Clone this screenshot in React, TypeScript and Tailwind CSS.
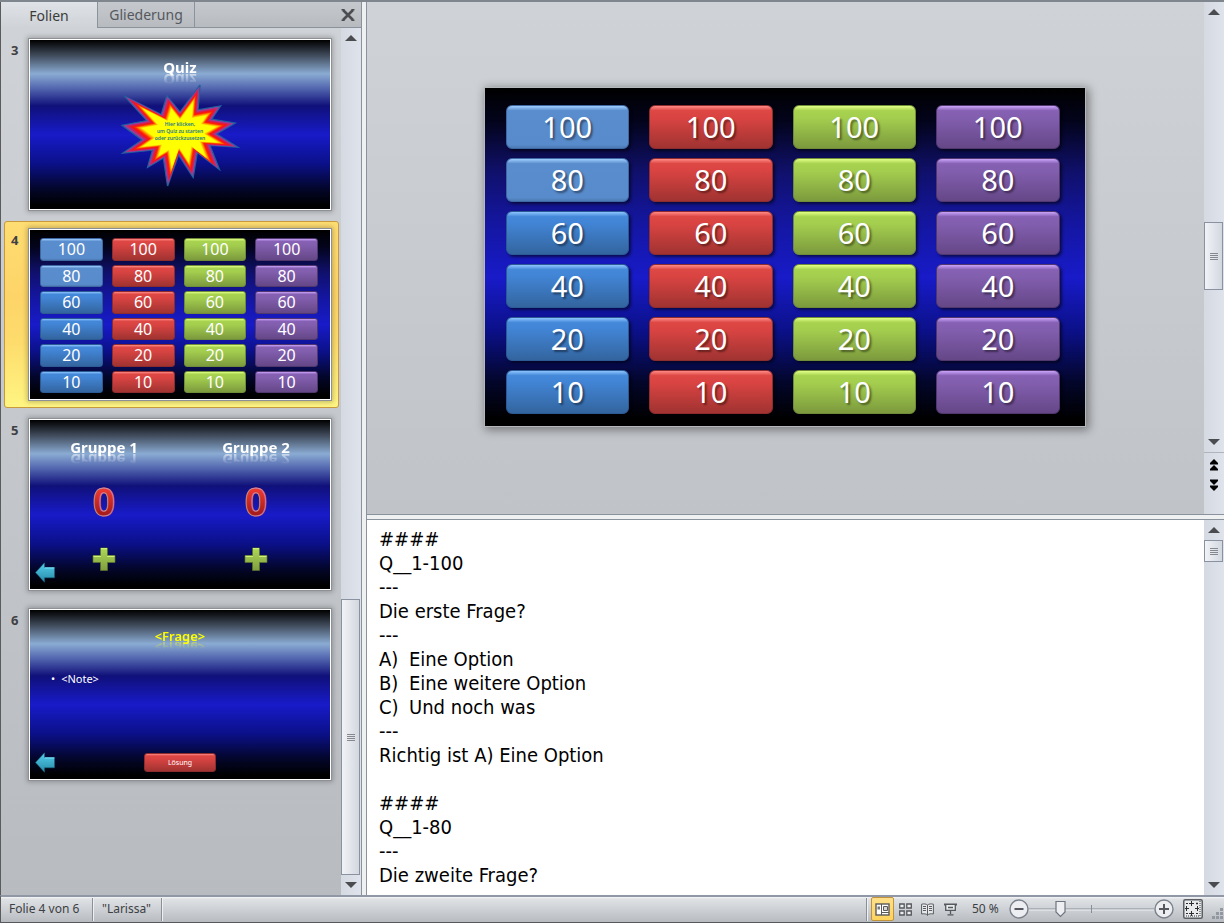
import React from "react";
import clsx from "clsx";

const TITLE_SLIDE_BG =
  "bg-[linear-gradient(180deg,#000_0%,#3f4a5a_9%,#8aabd3_20%,#5063ad_29%,#10107a_39%,#181bc8_56%,#0b108a_73%,#03062a_88%,#000_98%)]";
const BOARD_SLIDE_BG =
  "bg-[linear-gradient(180deg,#000_0%,#03041c_10%,#10106c_25%,#1416a0_40%,#181bc8_56%,#0b1088_72%,#03062a_87%,#000_98%)]";

const TITLE_REFLECTION =
  "[-webkit-box-reflect:below_-7px_linear-gradient(transparent_30%,rgba(255,255,255,0.8)_100%)]";

const TONES = {
  blue: "border-[#2c5a94] bg-[linear-gradient(180deg,#8cc4ff_0%,#4488da_11%,#4285d6_25%,#33659f_100%)]",
  sky: "border-[#3d68a3] bg-[linear-gradient(180deg,#9fceff_0%,#5a8dcd_11%,#588bcb_92%,#4d7ab3_100%)]",
  red: "border-[#8d2c2e] bg-[linear-gradient(180deg,#ff8a86_0%,#dd4744_11%,#d94442_28%,#a03331_100%)]",
  green: "border-[#6f8c38] bg-[linear-gradient(180deg,#e2ff86_0%,#a8d350_11%,#a3cd4e_30%,#7c9a3d_100%)]",
  purple: "border-[#50386f] bg-[linear-gradient(180deg,#cba4fb_0%,#8661b4_11%,#825eae_30%,#654787_100%)]",
};
type Tone = keyof typeof TONES;

const COLUMN_TONES: Tone[] = ["blue", "red", "green", "purple"];
const POINTS = [100, 80, 60, 40, 20, 10];

const NOTES = [
  "####",
  "Q__1-100",
  "---",
  "Die erste Frage?",
  "---",
  "A)\tEine Option",
  "B)\tEine weitere Option",
  "C)\tUnd noch was",
  "---",
  "Richtig ist A) Eine Option",
  "",
  "####",
  "Q__1-80",
  "---",
  "Die zweite Frage?",
].join("\n");

function toneFor(column: number, points: number): Tone {
  return column === 0 && points >= 80 ? "sky" : COLUMN_TONES[column];
}

function Board({ large = false }: { large?: boolean }) {
  const Cell = large ? "button" : "div";
  return (
    <div
      className={clsx(
        "grid h-full w-full grid-cols-4 grid-rows-6 text-white",
        BOARD_SLIDE_BG,
        large
          ? "gap-x-5 gap-y-[9px] pt-[17px] pr-[25px] pb-3 pl-[21px] text-[29px] leading-none"
          : "gap-x-[9px] gap-y-1 pt-2 pr-3 pb-[6px] pl-[10px] text-[16px] leading-none",
      )}
    >
      {POINTS.map((points) =>
        COLUMN_TONES.map((_, column) => (
          <Cell
            key={`${points}-${column}`}
            className={clsx(
              "flex items-center justify-center border",
              TONES[toneFor(column, points)],
              large
                ? "rounded-md pb-[2px] shadow-[2px_2px_3px_rgba(0,0,0,0.55)] [text-shadow:2px_2px_2px_rgba(0,0,0,0.45)]"
                : "rounded-[3px]",
            )}
          >
            {points}
          </Cell>
        )),
      )}
    </div>
  );
}

const BURST =
  "10800,5800 8352,2295 7312,6320 370,2295 4627,7617 0,8615 3722,11775 135,14587 5667,13937 4762,17617 7715,15627 8485,21600 10532,14935 13247,19737 14020,14457 18145,18095 16380,12942 21600,13290 17607,10475 21097,8137 16702,7315 18380,4457 14155,5325 14522,0";

const BURST_LAYERS: [number, string][] = [
  [0.97, "#a03a98"],
  [0.93, "#b52d7c"],
  [0.9, "#d8204c"],
  [0.86, "#f01522"],
  [0.82, "#ff1c08"],
  [0.78, "#ff4400"],
  [0.75, "#ff7a00"],
  [0.72, "#ffa800"],
  [0.69, "#ffd400"],
  [0.66, "#ffff00"],
];

function Burst() {
  return (
    <svg viewBox="0 0 21600 21600" preserveAspectRatio="none" className="h-full w-full overflow-visible" aria-hidden="true">
      <polygon points={BURST} fill="#8e4ab4" stroke="#1f5f9c" strokeWidth="260" />
      {BURST_LAYERS.map(([scale, fill]) => (
        <polygon
          key={scale}
          points={BURST}
          fill={fill}
          transform={`translate(10800 10400) scale(${scale}) translate(-10800 -10400)`}
        />
      ))}
    </svg>
  );
}

function QuizSlide() {
  return (
    <div className={clsx("flex h-full flex-col items-center pt-[17px]", TITLE_SLIDE_BG)}>
      <div className={clsx("text-[15px] leading-5 font-bold text-white", TITLE_REFLECTION)}>Quiz</div>
      <div className="mt-2 grid h-[101px] w-[116px]">
        <div className="col-start-1 row-start-1 h-[101px]">
          <Burst />
        </div>
        <div className="z-10 col-start-1 row-start-1 pt-9 text-center text-[5px] leading-[7px] font-semibold whitespace-nowrap text-[#17788c]">
          Hier klicken,
          <br />
          um Quiz zu starten
          <br />
          oder zurückzusetzen
        </div>
      </div>
    </div>
  );
}

function BackArrow() {
  return (
    <svg width="20" height="21" viewBox="0 0 20 21" aria-hidden="true">
      <defs>
        <linearGradient id="back" x1="0" y1="0" x2="0" y2="1">
          <stop offset="0" stopColor="#56d0ee" />
          <stop offset="1" stopColor="#2589a6" />
        </linearGradient>
      </defs>
      <path d="M0.5 10.5 9.5 0.8V5.5H19.5V15.8H9.5V20.3Z" fill="url(#back)" stroke="#17637a" strokeWidth="0.5" />
      <path d="M9.7 5.9H19.3" stroke="#7fe9ff" strokeWidth="1" />
    </svg>
  );
}

function Plus() {
  return (
    <svg width="24" height="24" viewBox="0 0 24 24" aria-hidden="true">
      <defs>
        <linearGradient id="plus" x1="0" y1="0" x2="0" y2="1">
          <stop offset="0" stopColor="#aed957" />
          <stop offset="1" stopColor="#7f9d3f" />
        </linearGradient>
      </defs>
      <path d="M8.5 1H15.5V8.5H23V15.5H15.5V23.5H8.5V15.5H1V8.5H8.5Z" fill="url(#plus)" stroke="#5b702b" strokeWidth="0.7" />
      <path d="M9 1.7H15M1.5 9.3H8.8M15.2 9.3H22.5" stroke="#dcff80" strokeWidth="1" />
    </svg>
  );
}

function GroupSlide() {
  return (
    <div className={clsx("flex h-full flex-col pt-[17px]", TITLE_SLIDE_BG)}>
      <div className="grid grid-cols-2 gap-2 px-[2px]">
        {["Gruppe 1", "Gruppe 2"].map((name) => (
          <div key={name} className="flex flex-col items-center">
            <div className={clsx("text-[15px] leading-5 font-bold text-white", TITLE_REFLECTION)}>{name}</div>
            <div className="mt-6 bg-[linear-gradient(180deg,#ef3a32_20%,#a81c1a_80%)] bg-clip-text font-['Open_Sans','Noto_Sans',sans-serif] text-[39px] leading-10 font-bold text-transparent [-webkit-text-stroke:1px_#c98a9e]">
              0
            </div>
            <div className="mt-[26px]">
              <Plus />
            </div>
          </div>
        ))}
      </div>
      <div className="-mt-[9px] pl-[5px]">
        <BackArrow />
      </div>
    </div>
  );
}

function QuestionSlide() {
  return (
    <div className={clsx("flex h-full flex-col pt-4 pb-[6px]", TITLE_SLIDE_BG)}>
      <div className="text-center text-[13px] leading-5 font-semibold text-[#ffff00] [-webkit-box-reflect:below_-9px_linear-gradient(transparent_40%,rgba(255,255,255,0.8)_100%)]">
        &lt;Frage&gt;
      </div>
      <ul className="mt-[25px] pl-[21px] text-[11px] leading-4 text-white">
        <li className="flex gap-[6px]">
          <span>•</span>
          <span>&lt;Note&gt;</span>
        </li>
      </ul>
      <div className="mt-auto grid grid-cols-[1fr_72px_1fr] items-center pr-[5px] pl-[5px]">
        <BackArrow />
        <div className={clsx("flex h-[19px] items-center justify-center rounded-[3px] border text-[7px] leading-none text-white", TONES.red)}>
          Lösung
        </div>
      </div>
    </div>
  );
}

const SLIDES = [
  { number: 3, selected: false, content: <QuizSlide /> },
  { number: 4, selected: true, content: <Board /> },
  { number: 5, selected: false, content: <GroupSlide /> },
  { number: 6, selected: false, content: <QuestionSlide /> },
];

function ArrowButton({ label, down = false }: { label: string; down?: boolean }) {
  return (
    <button aria-label={label} className="flex h-5 w-full shrink-0 items-center justify-center">
      <svg width="12" height="6" viewBox="0 0 12 6" className={clsx(down && "rotate-180")} aria-hidden="true">
        <path d="M6 0 12 6H0Z" fill="#4a4c50" />
      </svg>
    </button>
  );
}

function PageButton({ label, down = false }: { label: string; down?: boolean }) {
  return (
    <button aria-label={label} className="flex h-5 w-full shrink-0 items-center justify-center">
      <svg width="10" height="12" viewBox="0 0 10 12" className={clsx(down && "rotate-180")} aria-hidden="true">
        <path d="M5 0 9 4V5.5H1V4ZM5 6 9 10V11.5H1V10Z" fill="#000" />
      </svg>
    </button>
  );
}

function Thumb({ className }: { className: string }) {
  return (
    <div
      className={clsx(
        "flex w-[19px] shrink-0 flex-col items-center justify-center gap-px border border-[#8a92a0] bg-linear-to-r from-[#f1f3f7] to-[#d3d7df]",
        className,
      )}
    >
      {[0, 1, 2, 3].map((line) => (
        <span key={line} className="h-px w-2 bg-[#85898f]" />
      ))}
    </div>
  );
}

const TRACK = "flex w-5 shrink-0 flex-col bg-linear-to-r from-[#d5d9e2] to-[#dfe3ec]";

function SlidesPane() {
  return (
    <aside className="flex w-[362px] shrink-0 flex-col border-r border-l border-r-[#8a929c] border-l-[#5b5b5b]">
      <div className="flex h-[26px] shrink-0 bg-linear-to-b from-[#c5c9ce] to-[#b7bbc0] text-[14px] text-[#55585d]" role="tablist">
        <button role="tab" aria-selected="true" className="w-24 bg-linear-to-b from-[#dfe2e6] to-[#cfd2d6] text-[#3b3b3b]">
          Folien
        </button>
        <button role="tab" aria-selected="false" className="w-[98px] border-x border-b border-[#8a929c]">
          Gliederung
        </button>
        <div className="flex flex-1 items-center justify-end border-b border-[#8a929c] pr-[6px]">
          <button aria-label="Schließen">
            <svg width="14" height="12" viewBox="0 0 14 12" aria-hidden="true">
              <path d="M2 1 12 11M12 1 2 11" stroke="#4b4d50" strokeWidth="2.6" />
              <path d="M0.5 0.7H3.5M10.5 0.7H13.5M0.5 11.3H3.5M10.5 11.3H13.5" stroke="#4b4d50" strokeWidth="1.4" />
            </svg>
          </button>
        </div>
      </div>
      <div className="flex min-h-0 flex-1 bg-linear-to-b from-[#cfd2d6] to-[#b8bbc0]">
        <ol className="flex min-w-0 flex-1 flex-col gap-[3px] overflow-hidden pt-[3px] pr-[2px] pl-[3px]">
          {SLIDES.map(({ number, selected, content }) => (
            <li
              key={number}
              className={clsx(
                "flex h-[187px] shrink-0 rounded-[3px] border pt-[7px]",
                selected
                  ? "border-[#c99a3c] bg-[linear-gradient(180deg,#fedd72_0%,#fdd468_40%,#fddc6c_65%,#fff582_100%)]"
                  : "border-transparent",
              )}
            >
              <span className="w-6 pt-[3px] pl-[6px] text-[13px] leading-4 font-bold text-[#3f4043]">{number}</span>
              <div className="h-[171px] w-[302px] overflow-hidden border border-white shadow-[0_0_0_1px_#8d9095,0_0_5px_2px_rgba(0,0,0,0.25)]">
                {content}
              </div>
            </li>
          ))}
        </ol>
        <div className={TRACK}>
          <ArrowButton label="Nach oben" />
          <div className="flex-1" />
          <Thumb className="h-[276px]" />
          <ArrowButton label="Nach unten" down />
        </div>
      </div>
    </aside>
  );
}

function Editor() {
  return (
    <main className="ml-1 flex min-w-0 flex-1 flex-col border-l border-[#8a929c]">
      <section className="flex min-h-0 flex-1 border-b border-[#8a929c]">
        <div className="flex min-w-0 flex-1 items-center justify-center bg-linear-to-b from-[#cfd2d6] to-[#c0c3c8] pr-[2px] pb-[2px]">
          <div className="h-[338px] w-[600px] shadow-[0_0_0_1px_#b4b7bb,2px_2px_9px_2px_rgba(0,0,0,0.4)]">
            <Board large />
          </div>
        </div>
        <div className={TRACK}>
          <ArrowButton label="Nach oben" />
          <Thumb className="mt-[200px] h-[68px]" />
          <div className="flex-1" />
          <ArrowButton label="Nach unten" down />
          <div className="h-[62px] border-t border-[#aeb4be] pt-[2px]">
            <PageButton label="Vorherige Folie" />
            <PageButton label="Nächste Folie" down />
          </div>
        </div>
      </section>
      <section className="mt-1 flex h-[376px] shrink-0 border-t border-[#8a929c] bg-white">
        <textarea
          aria-label="Notizen"
          defaultValue={NOTES}
          className="min-w-0 flex-1 resize-none overflow-hidden pt-[7px] pl-3 font-['DejaVu_Sans_Condensed','DejaVu_Sans',sans-serif] text-[20px] leading-6 text-black outline-none [tab-size:30px]"
        />
        <div className={TRACK}>
          <ArrowButton label="Nach oben" />
          <Thumb className="h-[22px]" />
          <div className="flex-1" />
          <ArrowButton label="Nach unten" down />
        </div>
      </section>
    </main>
  );
}

function Divider() {
  return <span className="h-[23px] w-[2px] border-l border-[#8b9098] bg-[#eef0f2]" />;
}

function ZoomButton({ label, plus = false }: { label: string; plus?: boolean }) {
  return (
    <button aria-label={label} className="shrink-0">
      <svg width="20" height="20" viewBox="0 0 20 20" aria-hidden="true">
        <circle cx="10" cy="10" r="9" fill="#eceef1" stroke="#7b828c" strokeWidth="1.4" />
        <path d={plus ? "M5 10H15M10 5V15" : "M5.5 10H14.5"} stroke="#55595f" strokeWidth="2" />
      </svg>
    </button>
  );
}

const VIEW_BUTTON = "flex h-6 w-[23px] items-center justify-center";

function StatusBar() {
  return (
    <footer className="flex h-7 shrink-0 items-center border-t-2 border-b border-l border-t-[#8f98a4] border-b-[#55585c] border-l-[#5b5b5b] bg-[linear-gradient(180deg,#f4f5f7_0%,#dfe2e5_8%,#cdd0d4_50%,#b8bbbf_100%)] pb-px text-[12px] text-[#3c3f44]">
      <span className="w-[91px] pl-2">Folie 4 von 6</span>
      <Divider />
      <span className="w-[67px] pl-2">"Larissa"</span>
      <Divider />
      <div className="flex-1" />
      <Divider />
      <div className="ml-[3px] flex items-center">
        <button aria-label="Normal" className={clsx(VIEW_BUTTON, "rounded-[2px] border border-[#c2933a] bg-linear-to-b from-[#fee08a] to-[#fdd25c]")}>
          <svg width="15" height="13" viewBox="0 0 15 13" aria-hidden="true">
            <rect x="1" y="1" width="13" height="11" fill="#fff" stroke="#5a5a5a" strokeWidth="1.4" />
            <path d="M6.5 1V12M6 9.5H14" stroke="#5a5a5a" />
            <path d="M2.500 3.500H5V6.500H2.500Z" fill="#77797c" />
            <path d="M8.500 3.500H12.500V7.500H8.500Z" fill="#d4d6d9" stroke="#5a5a5a" />
          </svg>
        </button>
        <button aria-label="Foliensortierung" className={VIEW_BUTTON}>
          <svg width="13" height="13" viewBox="0 0 13 13" fill="#eceef0" stroke="#55585c" strokeWidth="1.3" aria-hidden="true">
            <path d="M0.7 1H5.2V5H0.7ZM7.8 1H12.3V5H7.8ZM0.7 8H5.2V12H0.7ZM7.8 8H12.3V12H7.8Z" />
          </svg>
        </button>
        <button aria-label="Leseansicht" className={clsx(VIEW_BUTTON, "pr-[2px]")}>
          <svg width="13" height="13" viewBox="0 0 13 13" fill="none" stroke="#5a5d61" aria-hidden="true">
            <path d="M6.5 2C5 0.8 3 0.7 0.6 1.2V11C3 10.5 5 10.7 6.5 12C8 10.7 10 10.5 12.4 11V1.2C10 0.7 8 0.8 6.5 2Z" fill="#e6e8ea" />
            <path d="M6.5 2V12.5M2 3.5H5M2 5.5H5M2 7.5H5M8 3.5H11M8 5.5H11M8 7.5H11" />
          </svg>
        </button>
        <button aria-label="Bildschirmpräsentation" className={clsx(VIEW_BUTTON, "pr-[2px]")}>
          <svg width="13" height="13" viewBox="0 0 13 13" fill="none" stroke="#55585c" aria-hidden="true">
            <path d="M0 1.5H13" strokeWidth="2" />
            <path d="M1.7 2V7.3H11.3V2" fill="#e9ebed" strokeWidth="1.3" />
            <path d="M4 4.5H9M6.5 7.5V11M3.5 11.8H9.5" strokeWidth="1.3" />
          </svg>
        </button>
      </div>
      <span className="w-[46px] pl-[9px] whitespace-nowrap">50 %</span>
      <ZoomButton label="Verkleinern" />
      <div className="relative h-5 w-[125px]">
        <svg width="125" height="20" viewBox="0 0 125 20" aria-hidden="true">
          <path d="M0 10H125" stroke="#868e99" />
          <path d="M0 11H125" stroke="#eef0f2" />
          <path d="M62.5 6V14" stroke="#868e99" />
          <path d="M27 2.5H36V13L31.5 17.5 27 13Z" fill="#eceef1" stroke="#6e757f" strokeWidth="1.2" />
        </svg>
        <input type="range" aria-label="Zoom" min={10} max={400} defaultValue={50} className="absolute inset-0 h-full w-full opacity-0" />
      </div>
      <ZoomButton label="Vergrößern" plus />
      <button aria-label="An Fenster anpassen" className="mr-[6px] ml-[9px]">
        <svg width="20" height="20" viewBox="0 0 20 20" fill="none" aria-hidden="true">
          <rect x="0.75" y="0.75" width="18.5" height="18.5" rx="1.5" fill="#e9ebed" stroke="#5b5e62" strokeWidth="1.5" />
          <path d="M17 2V17H2" stroke="#8b8f94" strokeWidth="2" strokeDasharray="1 1" />
          <path d="M8.500 2V7M6 4.500H11M8.500 12V17M6 14.500H11M2 9.500H6M3.500 7V12M12 9.500H16M14.500 7V12M13 4.500H15M14 3.500V5.500M3 4.500H5M3 14.500H5M13 14.500H15" stroke="#2b2d30" />
        </svg>
      </button>
      <svg width="15" height="14" viewBox="0 0 15 14" fill="#9298a0" className="self-end" aria-hidden="true">
        <path d="M11 1H14V4H11ZM7 5H10V8H7ZM11 5H14V8H11ZM3 9H6V12H3ZM7 9H10V12H7ZM11 9H14V12H11Z" />
      </svg>
    </footer>
  );
}

export default function App() {
  return (
    <div className="flex h-screen flex-col overflow-hidden bg-[#eef0f2] font-['Noto_Sans','Open_Sans',sans-serif]">
      <div className="flex min-h-0 flex-1 border-t-2 border-[#80868e]">
        <SlidesPane />
        <Editor />
      </div>
      <StatusBar />
    </div>
  );
}
